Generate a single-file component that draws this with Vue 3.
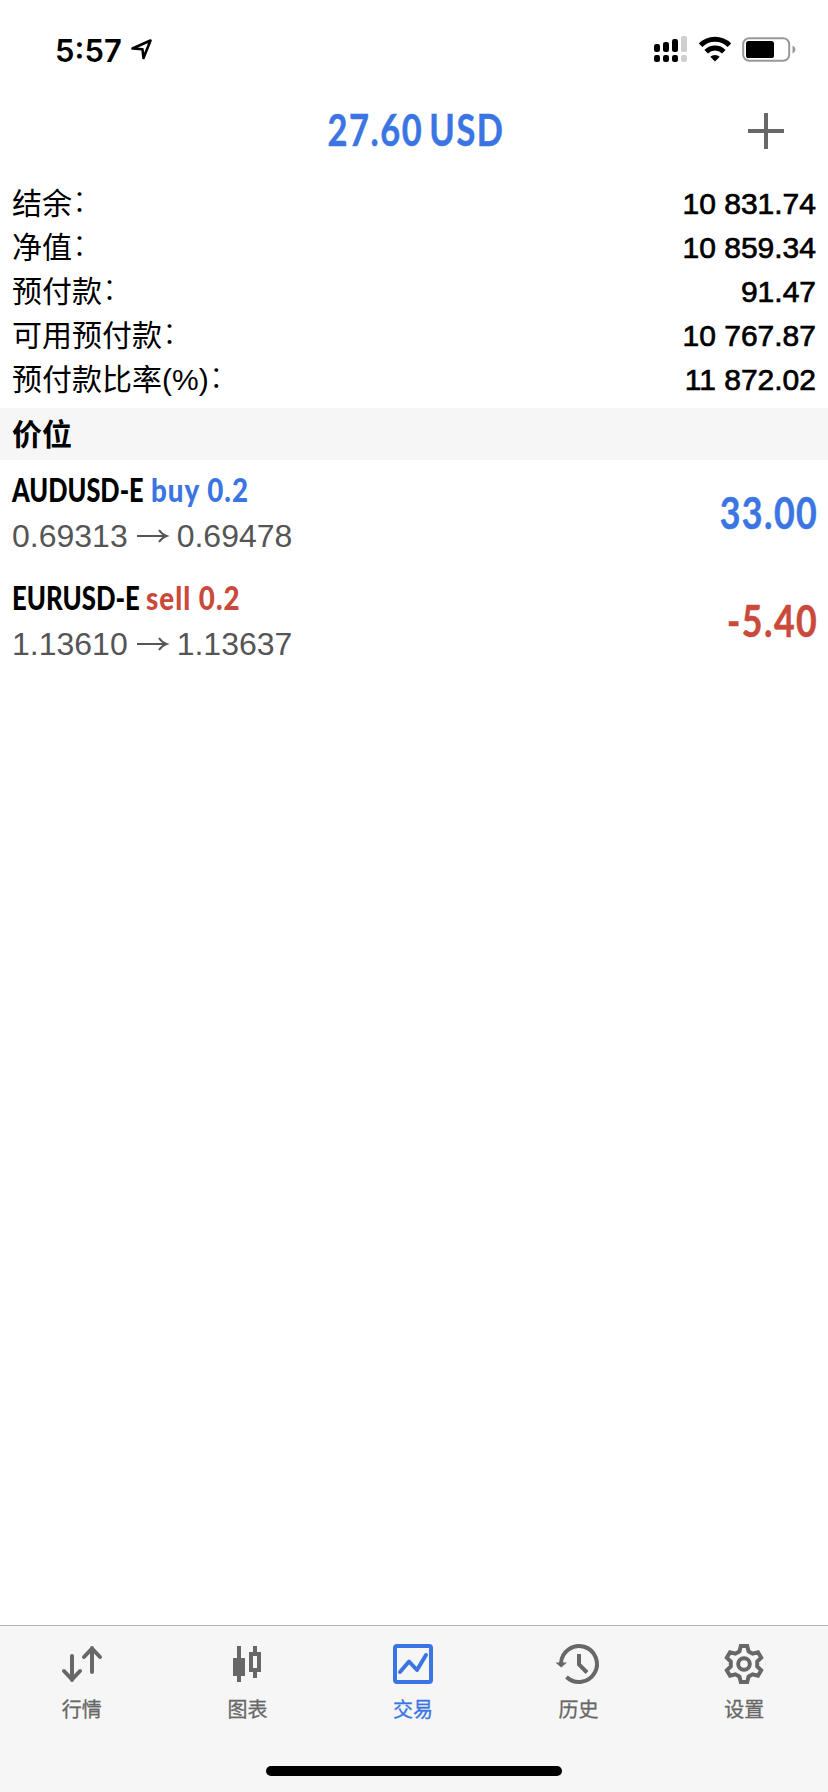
<script setup>
const account = [
  { label: '结余', value: '10 831.74' },
  { label: '净值', value: '10 859.34' },
  { label: '预付款', value: '91.47' },
  { label: '可用预付款', value: '10 767.87' },
  { label: '预付款比率(%)', value: '11 872.02' },
]

const positions = [
  { symbol: 'AUDUSD-E', order: 'buy 0.2', side: 'buy', open: '0.69313', current: '0.69478', profit: '33.00' },
  { symbol: 'EURUSD-E', order: 'sell 0.2', side: 'sell', open: '1.13610', current: '1.13637', profit: '-5.40' },
]

const tabs = [
  { id: 'quotes', label: '行情' },
  { id: 'charts', label: '图表' },
  { id: 'trade', label: '交易' },
  { id: 'history', label: '历史' },
  { id: 'settings', label: '设置' },
]

const tooth = [[-4.6, -12.6], [-3.2, -18], [3.2, -18], [4.6, -12.6]]
const gear = Array.from({ length: 6 }, (_, i) => {
  const a = (i * Math.PI) / 3
  return tooth
    .map(([x, y]) => [
      (22 + x * Math.cos(a) - y * Math.sin(a)).toFixed(2),
      (22 + x * Math.sin(a) + y * Math.cos(a)).toFixed(2),
    ].join(','))
    .join(' ')
}).join(' ')
</script>

<template>
  <div class="screen">
    <header class="status">
      <div class="clock">
        <span>5:57</span>
        <svg class="location" width="24" height="24" viewBox="0 0 24 24">
          <path d="M2.500 10.500 20.500 2.500 13.500 20 12.500 11.300Z" />
        </svg>
      </div>
      <div class="indicators">
        <svg width="34" height="28" viewBox="0 0 34 28">
          <rect x="0" y="9" width="6" height="8" rx="2.200" />
          <rect x="9" y="7" width="6" height="10" rx="2.200" />
          <rect x="18" y="4" width="6" height="13" rx="2.200" />
          <rect class="dim" x="27" y="1" width="6" height="16" rx="1.500" />
          <rect x="0" y="20" width="6" height="7" rx="2.200" />
          <rect x="9" y="20" width="6" height="7" rx="2.200" />
          <rect x="18" y="20" width="6" height="7" rx="2.200" />
          <rect class="dim" x="27" y="20" width="6" height="7" rx="2.200" />
        </svg>
        <svg class="wifi" width="32" height="28" viewBox="0 0 32 28">
          <path class="arc" d="M1.600 10.200A20.400 20.400 0 0 1 30.400 10.200M7.200 16.700A12.500 12.500 0 0 1 24.800 16.700" />
          <path d="M16 26.500 11.300 21.800A6.800 6.800 0 0 1 20.700 21.800Z" />
        </svg>
        <svg class="battery" width="54" height="28" viewBox="0 0 54 28">
          <rect class="shell" x="1.200" y="4.200" width="46" height="22.600" rx="6" />
          <rect x="4" y="7" width="28" height="17" rx="2.600" />
          <path class="nub" d="M50.500 11.500Q53.500 13 53.500 15.500T50.500 19.500Z" />
        </svg>
      </div>
    </header>

    <div class="titlebar">
      <h1 class="total">27.60 USD</h1>
      <svg class="plus" width="36" height="36" viewBox="0 0 36 36">
        <path d="M18 0V36M0 18H36" />
      </svg>
    </div>

    <dl class="account">
      <div v-for="row in account" :key="row.label" class="account-row">
        <dt>{{ row.label }}<span class="colon">：</span></dt>
        <dd>{{ row.value }}</dd>
      </div>
    </dl>

    <h2 class="section">价位</h2>

    <div v-for="p in positions" :key="p.symbol" class="position" :class="p.side">
      <div class="details">
        <div class="heading">
          <span class="symbol"><b>{{ p.symbol }}</b></span>
          <span class="order"><b>{{ p.order }}</b></span>
        </div>
        <div class="prices">
          <span>{{ p.open }}</span>
          <svg width="32" height="18" viewBox="0 0 32 18">
            <path d="M0 9H29M22 3Q25 7.500 29.500 9Q25 10.500 22 15" />
          </svg>
          <span>{{ p.current }}</span>
        </div>
      </div>
      <div class="profit">{{ p.profit }}</div>
    </div>

    <nav class="tabbar">
      <div v-for="t in tabs" :key="t.id" class="tab" :class="{ active: t.id === 'trade' }">
        <svg class="icon" width="44" height="44" viewBox="0 0 44 44">
          <g v-if="t.id === 'quotes'" class="round">
            <path d="M12 14V38M4 29 12 37.500 20 29M32 30V6M24 15 32 6.500 40 15" />
          </g>
          <g v-else-if="t.id === 'charts'">
            <path class="solid" d="M12 4h4v12h4v18h-4v6h-4v-6H8V16h4Z" />
            <path class="solid" fill-rule="evenodd" d="M28 4h4v6h4v20h-4v6h-4v-6h-4V10h4ZM28 14v12h4V14Z" />
          </g>
          <g v-else-if="t.id === 'trade'" class="round">
            <rect x="4" y="4" width="36" height="36" rx="2" />
            <path d="M9 30 18 19.500 26 28 35 13" />
          </g>
          <g v-else-if="t.id === 'history'">
            <path d="M4 21A18 18 0 1 1 9.500 35" />
            <path d="M22 12V22.500L30 30.500" />
            <path class="solid" d="M-1.500 20.500H10L4.200 25.500Z" />
          </g>
          <g v-else>
            <polygon :points="gear" />
            <circle cx="22" cy="22" r="5.800" />
          </g>
        </svg>
        <span class="tab-label">{{ t.label }}</span>
      </div>
      <div class="home"></div>
    </nav>
  </div>
</template>

<style>
body {
  margin: 0;
  background: #fff;
}
</style>

<style scoped>
.screen {
  display: flex;
  flex-direction: column;
  width: 828px;
  height: 1792px;
  overflow: hidden;
  background: #fff;
  color: #000;
  font-family: "Liberation Sans", "Noto Sans CJK SC", sans-serif;
}
svg {
  display: block;
  flex: none;
  overflow: visible;
}
.status {
  box-sizing: border-box;
  display: flex;
  justify-content: space-between;
  height: 88px;
  padding: 35px 32px 0 55px;
}
.clock {
  display: flex;
  height: 32px;
  font: 600 31px/32px Inter, sans-serif;
}
.location {
  margin: 3px 0 0 8px;
  fill: none;
  stroke: #000;
  stroke-width: 2.6;
  stroke-linejoin: round;
}
.indicators {
  display: flex;
}
.dim {
  fill: #cfcfcf;
}
.wifi {
  margin-left: 11px;
}
.arc {
  fill: none;
  stroke: #000;
  stroke-width: 5;
}
.battery {
  margin: -1px 0 0 11px;
}
.shell {
  fill: none;
  stroke: #999;
  stroke-width: 2;
}
.nub {
  fill: #999;
}
.titlebar {
  display: grid;
  grid-template-columns: 1fr auto 1fr;
  align-items: center;
  height: 86px;
}
.total {
  grid-column: 2;
  margin: -4px -4px 0 0;
  color: #3a75e3;
  font: 700 43.5px/52px Lato, sans-serif;
  letter-spacing: 2px;
  word-spacing: -5px;
  -webkit-text-stroke: 0.5px currentColor;
  transform: scaleX(0.79);
}
.plus {
  justify-self: end;
  margin-right: 49px;
  stroke: #676767;
  stroke-width: 4;
}
.titlebar .plus {
  margin-right: 44px;
}
.account {
  height: 234px;
  margin: 0;
  padding: 0 12px;
  box-sizing: border-box;
  padding-top: 8px;
}
.account-row {
  display: flex;
  justify-content: space-between;
  height: 44px;
  font-size: 30px;
  line-height: 44px;
}
dt {
  white-space: nowrap;
}
.colon {
  position: relative;
  top: -3px;
  font-weight: 300;
}
dd {
  margin: 0;
  -webkit-text-stroke: 0.7px #000;
}
.section {
  height: 51px;
  margin: 0;
  padding: 1px 0 0 12px;
  background: #f6f6f6;
  font-size: 30px;
  font-weight: 700;
  line-height: 51px;
}
.position {
  display: flex;
  align-items: center;
  justify-content: space-between;
  height: 108px;
  padding: 0 12px;
}
.heading {
  display: flex;
  height: 46px;
  margin-top: -2px;
  font: 700 33px/42px Lato, sans-serif;
  white-space: nowrap;
}
.heading b {
  display: inline-block;
  transform-origin: left;
}
.symbol {
  width: 139px;
}
.sell .symbol {
  width: 134px;
}
.symbol b {
  transform: scaleX(0.768);
}
.sell .symbol b {
  transform: scaleX(0.78);
}
.order b {
  letter-spacing: 1.2px;
  transform: scaleX(0.84);
}
.prices {
  display: flex;
  align-items: center;
  height: 44px;
  color: #555;
  font-size: 32px;
}
.prices svg {
  margin: 0 8px 0 9px;
  fill: none;
  stroke: #555;
  stroke-width: 2;
}
.profit {
  margin: -4px -2px 0 0;
  font: 700 43.5px/52px Lato, sans-serif;
  letter-spacing: 1.8px;
  -webkit-text-stroke: 0.5px currentColor;
  transform: scaleX(0.82);
  transform-origin: right;
}
.buy .order,
.buy .profit {
  color: #3a75e3;
}
.sell .order,
.sell .profit {
  color: #c94a3b;
}
.tabbar {
  box-sizing: border-box;
  display: grid;
  grid-template-columns: repeat(5, 1fr);
  grid-template-rows: 1fr auto;
  justify-items: center;
  height: 167px;
  margin-top: auto;
  border-top: 1px solid #b2b2b2;
  background: #f6f6f6;
}
.tab {
  display: flex;
  flex-direction: column;
  align-items: center;
  padding: 16px 2px 0 0;
  color: #676767;
}
.active {
  color: #3a75e3;
}
.icon {
  fill: none;
  stroke: currentColor;
  stroke-width: 4;
}
.round {
  stroke-linecap: round;
  stroke-linejoin: round;
}
.solid {
  fill: currentColor;
  stroke: none;
}
.tab-label {
  margin-top: 8px;
  font-size: 20px;
  font-weight: 400;
  line-height: 30px;
  font-family: "Noto Sans CJK SC", sans-serif;
  -webkit-text-stroke: 0.3px currentColor;
}
.home {
  grid-column: 1 / -1;
  width: 296px;
  height: 10px;
  margin-bottom: 16px;
  border-radius: 5px;
  background: #000;
}
</style>
